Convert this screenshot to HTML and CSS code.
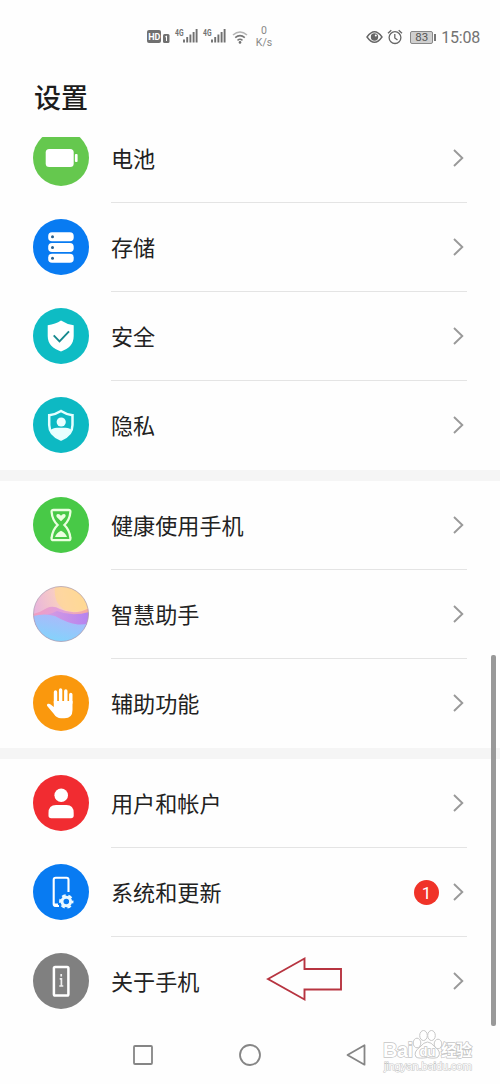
FILE: index.html
```html
<!DOCTYPE html>
<html lang="zh-CN">
<head>
<meta charset="utf-8">
<title>设置</title>
<link rel="stylesheet" href="styles.css">
</head>
<body>
<svg class="defs" width="0" height="0" aria-hidden="true">
  <defs>
    <symbol id="chevron" viewBox="0 0 14 20"><path d="M3 2l8.3 8L3 18" fill="none" stroke="#999" stroke-width="1.9"/></symbol>
    <symbol id="signal" viewBox="0 0 24 18"><path d="M10 14.5v-3M13.2 14.5V9M16.4 14.5V6.500M19.600 14.500V4M22.600 14.500V1" fill="none" stroke="#707070" stroke-width="1.9"/></symbol>
  </defs>
</svg>
<div class="phone">
  <header class="status">
    <div class="status-left">
      <svg class="hd" width="24" height="16" viewBox="0 0 24 16"><rect x="0" y="1" width="14" height="13" rx="2" fill="#707070"/><text x="1.200" y="11.200" class="hd-text">HD</text><rect x="16" y="5" width="6.500" height="9" rx="1.500" fill="#707070"/><path d="M18.200 8l1.300-1v5" stroke="#fff" fill="none"/></svg>
      <span class="cell"><svg width="24" height="18"><text x="1" y="7.500" class="net" textLength="8.500" lengthAdjust="spacingAndGlyphs">4G</text><use href="#signal"/></svg></span>
      <span class="cell"><svg width="24" height="18"><text x="1" y="7.500" class="net" textLength="8.500" lengthAdjust="spacingAndGlyphs">4G</text><use href="#signal"/></svg></span>
      <svg class="wifi" width="17" height="16" viewBox="0 0 17 16"><g fill="none" stroke="#777" stroke-width="1.600"><path d="M1 6q7-6 14 0" opacity=".55"/><path d="M3.200 8.700q4.800-4 9.600 0M5.500 11.300q2.500-2 5 0"/></g><circle cx="8" cy="13.400" r="1.300" fill="#707070"/></svg>
      <span class="speed"><span>0</span><span>K/s</span></span>
    </div>
    <div class="status-right">
      <svg width="17" height="14" viewBox="0 0 17 14"><path d="M1 7q7.500-10.500 15 0q-7.500 10.500-15 0z" fill="none" stroke="#666" stroke-width="1.400"/><circle cx="8.500" cy="7" r="3.700" fill="#666"/><circle cx="9.800" cy="5.600" r="1" fill="#fff"/></svg>
      <svg class="alarm" width="16" height="16" viewBox="0 0 16 16"><g fill="none" stroke="#666" stroke-width="1.300"><circle cx="8" cy="8.600" r="5.900"/><path d="M1 4.200l3.300-3M11.700 1.200l3.300 3M7.800 5v4l2.700 2"/></g></svg>
      <span class="battery">83</span><i class="nub"></i>
      <span class="time">15:08</span>
    </div>
  </header>
  <h1 class="title">设置</h1>
  <main class="list">
    <section class="group first">
      <div class="row">
        <svg class="icon" viewBox="0 0 56 56"><circle cx="28" cy="28" r="28" fill="#65c84e"/><rect x="12.700" y="19" width="28" height="18" rx="3.500" fill="#fff"/><rect x="41.900" y="24" width="2.700" height="8" rx="1" fill="#fff"/></svg>
        <div class="body"><span class="label">电池</span><svg class="chevron"><use href="#chevron"/></svg></div>
      </div>
      <div class="row">
        <svg class="icon" viewBox="0 0 56 56"><circle cx="28" cy="28" r="28" fill="#087bf2"/><g fill="#fff"><rect x="15.200" y="13.300" width="25.500" height="9" rx="3.800"/><rect x="15.200" y="24" width="25.500" height="9" rx="3.800"/><rect x="15.200" y="34.700" width="25.500" height="9" rx="3.800"/></g><g fill="#27608e"><circle cx="19.500" cy="17.800" r="1.500"/><circle cx="19.500" cy="28.500" r="1.500"/><circle cx="19.500" cy="39.200" r="1.500"/></g></svg>
        <div class="body"><span class="label">存储</span><svg class="chevron"><use href="#chevron"/></svg></div>
      </div>
      <div class="row">
        <svg class="icon" viewBox="0 0 56 56"><circle cx="28" cy="28" r="28" fill="#0ebcc4"/><path d="M28 12.500Q33.500 16.200 40.700 17.200V28C40.700 36 36 40.500 28 43.500C20 40.500 14.700 36 14.700 28V17.200Q22.500 16.200 28 12.500Z" fill="#fff"/><path d="M20.700 27.300l5.800 6 9.500-10" fill="none" stroke="#16898e" stroke-width="1.900"/></svg>
        <div class="body"><span class="label">安全</span><svg class="chevron"><use href="#chevron"/></svg></div>
      </div>
      <div class="row">
        <svg class="icon" viewBox="0 0 56 56"><circle cx="28" cy="28" r="28" fill="#0db9c3"/><path d="M28 14Q33 17.300 39.500 18.200V28C39.500 35 35.500 39.500 28 42.500C20.500 39.500 16.200 35 16.200 28V18.200Q23 17.300 28 14Z" fill="none" stroke="#e4ffff" stroke-width="2.500"/><circle cx="28.200" cy="25" r="4.600" fill="#e9ffff"/><path d="M17.500 33.300Q19.500 30.700 24 30.700h8.500q4.500 0 6 2.600Q35 39.500 28 42Q21 39.500 17.500 33.300z" fill="#e9ffff"/></svg>
        <div class="body"><span class="label">隐私</span><svg class="chevron"><use href="#chevron"/></svg></div>
      </div>
    </section>
    <section class="group">
      <div class="row">
        <svg class="icon" viewBox="0 0 56 56"><circle cx="28" cy="28" r="28" fill="#48c947"/><path d="M20.500 13h15q2.200 0 1.900 2c-.5 6-2.400 9.500-6 13c3.600 3.500 5.500 7 6 13q.3 2.200-1.900 2.200h-15q-2.200 0-1.900-2.200c.5-6 2.400-9.500 6-13c-3.600-3.500-5.500-7-6-13q-.3-2 1.900-2z" fill="none" stroke="#eaffdf" stroke-width="2.300"/><path d="M28 24.300l-4.300-4.200q-1.200-2.800 1.400-3.100q1.800 0 2.900 1.700q1.100-1.700 2.900-1.700q2.600.3 1.400 3.100zM22 40q1.200-4 6-6.300q4.800 2.300 6 6.300z" fill="#eaffdf"/></svg>
        <div class="body"><span class="label">健康使用手机</span><svg class="chevron"><use href="#chevron"/></svg></div>
      </div>
      <div class="row">
        <svg class="icon" viewBox="0 0 56 56">
          <defs>
            <clipPath id="orb"><circle cx="28" cy="28" r="27.500"/></clipPath>
            <linearGradient id="sky" x1="0" x2="1" y1=".3" y2="0"><stop offset="0" stop-color="#e9b5dc"/><stop offset=".5" stop-color="#fbd2bd"/><stop offset="1" stop-color="#ffdc8e"/></linearGradient>
            <linearGradient id="rose" x1="0" x2="1"><stop offset="0" stop-color="#f19dbe"/><stop offset=".5" stop-color="#dfa0df"/><stop offset="1" stop-color="#fcae97"/></linearGradient>
            <linearGradient id="violet" x1="0" x2="1"><stop offset="0" stop-color="#e0a3dc"/><stop offset="1" stop-color="#b583f0"/></linearGradient>
            <linearGradient id="sea" x1=".7" x2=".3" y1="0" y2="1"><stop offset="0" stop-color="#b0b6fa"/><stop offset="1" stop-color="#80d5fc"/></linearGradient>
          </defs>
          <g clip-path="url(#orb)"><rect width="56" height="56" fill="url(#sky)"/><path d="M22 0Q20 17 32 24Q44 28 56 21V0z" fill="#ffd890" opacity=".65"/><path d="M0 28Q8 26 14 22Q20 19 27 23Q42 30 56 22V39H0z" fill="url(#rose)"/><path d="M0 30Q15 30 24 25Q39 31 56 26V42H0z" fill="url(#violet)"/><path d="M0 30Q12 27 22 30Q34 37 45 38.500Q51 39 56 37V56H0z" fill="url(#sea)"/></g>
          <circle cx="28" cy="28" r="27.500" fill="none" stroke="#a99bb0" stroke-width=".7"/>
        </svg>
        <div class="body"><span class="label">智慧助手</span><svg class="chevron"><use href="#chevron"/></svg></div>
      </div>
      <div class="row">
        <svg class="icon" viewBox="0 0 56 56"><circle cx="28" cy="28" r="28" fill="#fa980d"/><path d="M22.500 28V17M27.600 27V15M32.800 27V16M37.800 28V19.500" stroke="#fff" stroke-width="3.400" stroke-linecap="round"/><path d="M20.800 26H39.500V35Q39.500 43.300 31.500 43.300H28Q23.500 43.300 20.500 38.500L14.200 31Q13.300 29.500 14.800 28.800Q16.500 28.300 18 29.800L20.800 32z" fill="#fff"/></svg>
        <div class="body"><span class="label">辅助功能</span><svg class="chevron"><use href="#chevron"/></svg></div>
      </div>
    </section>
    <section class="group">
      <div class="row">
        <svg class="icon" viewBox="0 0 56 56"><circle cx="28" cy="28" r="28" fill="#f12c31"/><circle cx="28.200" cy="20.200" r="6.800" fill="#fff"/><path d="M15.500 40.500V38Q15.500 30 23 30H33.500Q40.700 30 40.700 38V40.500Q40.700 43.300 38 43.300H18.200Q15.500 43.300 15.500 40.500z" fill="#fff"/></svg>
        <div class="body"><span class="label">用户和帐户</span><svg class="chevron"><use href="#chevron"/></svg></div>
      </div>
      <div class="row">
        <svg class="icon" viewBox="0 0 56 56"><circle cx="28" cy="28" r="28" fill="#087bf2"/><path d="M35.500 28V15.800q0-2-2-2H22.700q-2 0-2 2V40q0 2 2 2H26" fill="none" stroke="#fff" stroke-width="2.100"/><path d="M21 39.500h4v3h-4z" fill="#fff"/><circle cx="33.300" cy="37.500" r="4.300" fill="none" stroke="#eaf8ff" stroke-width="3"/><circle cx="33.300" cy="37.500" r="6.100" fill="none" stroke="#eaf8ff" stroke-width="2.200" stroke-dasharray="3.700 2.688" stroke-dashoffset="1.850"/></svg>
        <div class="body"><span class="label">系统和更新</span><span class="badge">1</span><svg class="chevron"><use href="#chevron"/></svg></div>
      </div>
      <div class="row">
        <svg class="icon" viewBox="0 0 56 56"><circle cx="28" cy="28" r="28" fill="#808080"/><rect x="20.900" y="13.900" width="14.500" height="28.700" rx="1.300" fill="none" stroke="#fff" stroke-width="2.500"/><path d="M28.200 21v2.500M26.700 25.800h1.700v7M26.300 33h4" fill="none" stroke="#eee" stroke-width="1.700"/></svg>
        <div class="body"><span class="label">关于手机</span><svg class="pointer" width="77" height="44" viewBox="0 0 77 44"><path d="M2 22L38.500 1.500V12H75V32.500H38.500V42.500z" fill="none" stroke="#b73440" stroke-width="1.900"/></svg><svg class="chevron"><use href="#chevron"/></svg></div>
      </div>
    </section>
  </main>
  <nav class="nav">
    <svg width="24" height="24" viewBox="0 0 24 24"><rect x="3" y="3" width="18" height="18" rx="1"/></svg>
    <svg width="24" height="24" viewBox="0 0 24 24"><circle cx="12" cy="12" r="10"/></svg>
    <svg width="24" height="24" viewBox="0 0 24 24"><path d="M2.500 12L19.500 2.300V21.700z" stroke-linejoin="round"/></svg>
  </nav>
  <i class="scrollbar"></i>
  <svg class="watermark" width="100" height="50" viewBox="0 0 100 50">
    <g fill="#fff" stroke="#c8c8c8" stroke-width="1"><ellipse cx="37" cy="16" rx="3.800" ry="4.800"/><ellipse cx="43.500" cy="8.500" rx="3.800" ry="5"/><ellipse cx="51.500" cy="8.500" rx="3.800" ry="5"/><ellipse cx="58" cy="17" rx="3.800" ry="4.800"/><path d="M47.500 15Q51 15 55 20Q62 25 58 30Q55 32 47.500 30.500Q39 32 36 30Q33 25 40 20Q44 15 47.500 15z"/></g>
    <text x="3" y="29.500" class="wm-big" textLength="30">Bai</text><text x="39.500" y="28.500" class="wm-du">du</text><text x="61" y="29" class="wm-cn" textLength="31">经验</text>
    <text x="4" y="42.500" class="wm-url" textLength="88">jingyan.baidu.com</text>
  </svg>
</div>
</body>
</html>
```

FILE: styles.css
```css
* { box-sizing: border-box; }
body { margin: 0; background: #fefefe; font-family: Roboto, "Noto Sans CJK SC", sans-serif; color: #222; }
svg { display: block; flex: none; overflow: visible; }
.defs { position: absolute; }
.phone { position: relative; width: 500px; height: 1084px; display: flex; flex-direction: column; overflow: hidden; }

.status { height: 74px; padding: 0 20px 0 147px; display: flex; justify-content: space-between; align-items: center; flex: none; color: #707070; }
.status-left, .status-right { display: flex; align-items: center; }
.hd-text { font: bold 9px Roboto, sans-serif; fill: #fff; }
.cell { display: flex; width: 25px; margin-left: 3px; }
.net { font: bold 9.500px Roboto, sans-serif; fill: #707070; }
.wifi { margin-left: 5px; }
.speed { display: flex; flex-direction: column; align-items: center; width: 18px; margin-left: 6px; font-size: 10.500px; line-height: 12px; color: #888; }
.alarm { margin-left: 4px; }
.battery { margin-left: 7px; width: 23px; height: 13px; border: 1px solid #888; border-radius: 2px; background: #cfcfcf; font-size: 11.500px; line-height: 11px; text-align: center; color: #555; }
.nub { width: 2px; height: 7px; margin-left: 1px; background: #777; }
.time { margin-left: 5px; font-size: 16px; letter-spacing: -.2px; color: #737373; }

.title { margin: 0; height: 63px; padding: 6px 34px 0; font-size: 27px; line-height: 38px; font-weight: 500; color: #1c1c1c; flex: none; }
.list { height: 889px; overflow: hidden; display: flex; flex-direction: column; gap: 11px; background: #f5f5f5; flex: none; }
.group { background: #fefefe; flex: none; }
.group.first { margin-top: -23px; }
.row { height: 89px; padding: 0 33px; display: flex; align-items: center; gap: 22px; }
.icon { width: 56px; height: 56px; margin-bottom: 1px; }
.body { position: relative; flex: 1; height: 89px; display: flex; align-items: center; border-bottom: 1px solid #e4e4e4; }
.row:last-child .body { border-bottom-color: transparent; }
.label { flex: 1; font-size: 22.100px; line-height: 32px; padding-top: 2px; }
.badge { width: 25px; height: 25px; margin-right: 12px; border-radius: 50%; background: #f03328; color: #fff; font-size: 17px; line-height: 26px; text-align: center; }
.chevron { width: 14px; height: 20px; margin-right: 2px; }
.pointer { position: absolute; left: 155px; top: 20px; }

.nav { flex: 1; display: flex; justify-content: center; align-items: center; gap: 83px; }
.nav svg { fill: none; stroke: #858585; stroke-width: 1.800; }
.scrollbar { position: absolute; left: 491px; top: 655px; width: 5px; height: 371px; border-radius: 2px; background: #999; }

.watermark { position: absolute; left: 380px; top: 1027px; }
.watermark text { fill: #fff; stroke: #c4c4c4; stroke-width: 1.400px; paint-order: stroke; }
.wm-big { font: bold 20px "Liberation Sans", sans-serif; }
.wm-du { font: bold 13px "Liberation Sans", sans-serif; }
.wm-cn { font: bold 16px "Noto Sans CJK SC", sans-serif; }
.watermark .wm-url { font: 11.500px "Liberation Sans", sans-serif; stroke-width: 1px; }
```
